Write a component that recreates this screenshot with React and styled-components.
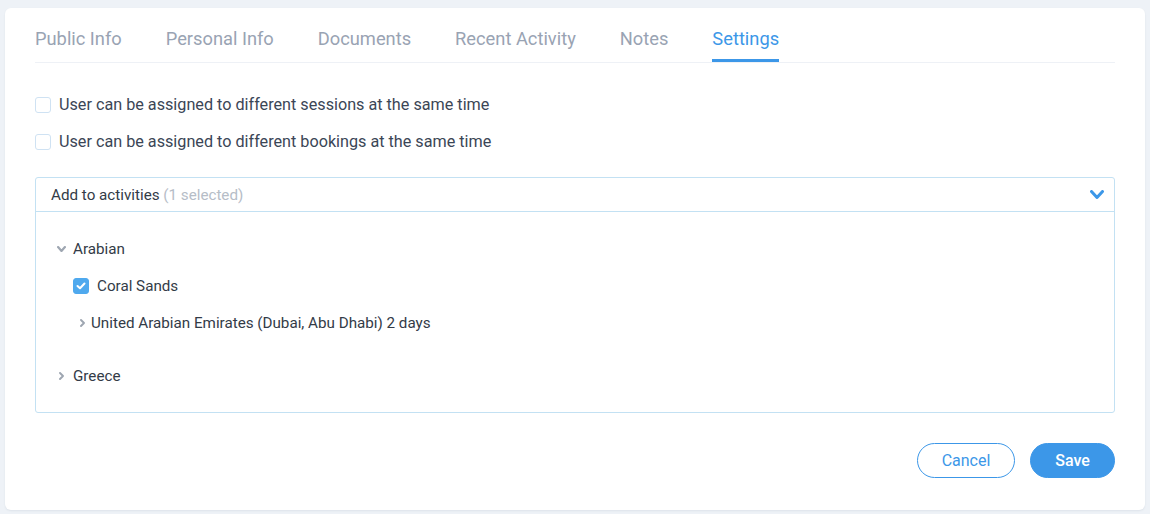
import React, { useState } from "react";
import styled, { createGlobalStyle } from "styled-components";

const GlobalStyle = createGlobalStyle`
  html, body { margin: 0; padding: 0; background: #eef2f7; }
  body { padding: 8px 5px 6px; font-family: Roboto, "Liberation Sans", Arial, sans-serif; }
  * { box-sizing: border-box; }
`;

const Card = styled.div`
  background: #fff;
  border-radius: 6px;
  box-shadow: 0 1px 2px rgba(40, 60, 90, 0.08);
  padding: 0 30px 32px;
`;

const TabList = styled.div`
  display: flex;
  gap: 44px;
  border-bottom: 1px solid #eef1f6;
`;

const Tab = styled.div`
  font-size: 18.3px;
  line-height: 22px;
  padding: 20px 0 9px;
  color: ${(p) => (p.$active ? "#3c97e8" : "#99a3b3")};
  border-bottom: 3px solid ${(p) => (p.$active ? "#3c97e8" : "transparent")};
  cursor: pointer;
`;

const Options = styled.div`
  display: flex;
  flex-direction: column;
  gap: 17px;
  margin-top: 32px;
`;

const CheckRow = styled.label`
  display: flex;
  align-items: center;
  gap: 8px;
  font-size: 16.2px;
  line-height: 20px;
  color: #3b4656;
`;

const Box = styled.span`
  width: 16px;
  height: 16px;
  border-radius: 3px;
  flex: none;
  display: inline-flex;
  align-items: center;
  justify-content: center;
  border: 1px solid ${(p) => (p.$checked ? "#4fa9ee" : "#cfe2f3")};
  background: ${(p) => (p.$checked ? "#4fa9ee" : "#fff")};
`;

const Dropdown = styled.div`
  margin-top: 25px;
  border: 1px solid #c3e1f3;
  border-radius: 3px;
`;

const DropHeader = styled.div`
  height: 34px;
  display: flex;
  align-items: center;
  justify-content: space-between;
  padding: 0 10px 0 15px;
  border-bottom: 1px solid #c3e1f3;
  font-size: 15.2px;
  color: #333b47;
`;

const Muted = styled.span`
  color: #b6bdc7;
`;

const TreeBody = styled.div`
  padding: 27px 20px 26px;
  display: flex;
  flex-direction: column;
`;

const TreeRow = styled.div`
  display: flex;
  align-items: center;
  height: 20px;
  font-size: 15.2px;
  color: #333b47;
  margin-top: ${(p) => p.$gap || 0}px;
  padding-left: ${(p) => p.$indent || 0}px;
  gap: ${(p) => p.$spacing || 8}px;
`;

const Caret = styled.span`
  width: ${(p) => p.$w || 10}px;
  display: inline-flex;
  justify-content: center;
  align-items: center;
  flex: none;
`;

const Actions = styled.div`
  display: flex;
  justify-content: flex-end;
  gap: 15px;
  margin-top: 30px;
`;

const Button = styled.button`
  height: 35px;
  border-radius: 18px;
  font-family: inherit;
  font-size: 16px;
  cursor: pointer;
  border: 1px solid #3c97e8;
  padding: 0;
  width: ${(p) => p.$w}px;
  color: ${(p) => (p.$primary ? "#fff" : "#3c97e8")};
  background: ${(p) => (p.$primary ? "#3c97e8" : "#fff")};
  font-weight: ${(p) => (p.$primary ? 500 : 400)};
`;

const Check = () => (
  <svg width="10" height="8" viewBox="0 0 10 8">
    <path d="M1.5 4 L4 6.3 L8.5 1.5" fill="none" stroke="#fff" strokeWidth="2" strokeLinecap="round" strokeLinejoin="round" />
  </svg>
);

const ChevDown = ({ color = "#9ea6b1", w = 9, h = 6, sw = 2.2 }) => (
  <svg width={w} height={h} viewBox={`0 0 ${w} ${h}`}>
    <path d={`M${sw / 2} ${sw / 2} L${w / 2} ${h - sw / 2} L${w - sw / 2} ${sw / 2}`} fill="none" stroke={color} strokeWidth={sw} strokeLinecap="round" strokeLinejoin="round" />
  </svg>
);

const ChevRight = () => (
  <svg width="5" height="8" viewBox="0 0 5 8">
    <path d="M1 1 L4 4 L1 7" fill="none" stroke="#9ea6b1" strokeWidth="1.9" strokeLinecap="round" strokeLinejoin="round" />
  </svg>
);

export default function App() {
  const tabs = ["Public Info", "Personal Info", "Documents", "Recent Activity", "Notes", "Settings"];
  const [active, setActive] = useState("Settings");
  return (
    <>
      <GlobalStyle />
      <Card>
        <TabList>
          {tabs.map((t) => (
            <Tab key={t} $active={t === active} onClick={() => setActive(t)}>
              {t}
            </Tab>
          ))}
        </TabList>
        <Options>
          <CheckRow>
            <Box />
            User can be assigned to different sessions at the same time
          </CheckRow>
          <CheckRow>
            <Box />
            User can be assigned to different bookings at the same time
          </CheckRow>
        </Options>
        <Dropdown>
          <DropHeader>
            <span>
              Add to activities <Muted>(1 selected)</Muted>
            </span>
            <ChevDown color="#3c97e8" w={14} h={9} sw={3} />
          </DropHeader>
          <TreeBody>
            <TreeRow $spacing={7}>
              <Caret $w={10}>
                <ChevDown />
              </Caret>
              Arabian
            </TreeRow>
            <TreeRow $gap={17} $indent={17} $spacing={8}>
              <Box $checked>
                <Check />
              </Box>
              Coral Sands
            </TreeRow>
            <TreeRow $gap={17} $indent={23} $spacing={6}>
              <Caret $w={6}>
                <ChevRight />
              </Caret>
              United Arabian Emirates (Dubai, Abu Dhabi) 2 days
            </TreeRow>
            <TreeRow $gap={33} $spacing={7}>
              <Caret $w={10}>
                <ChevRight />
              </Caret>
              Greece
            </TreeRow>
          </TreeBody>
        </Dropdown>
        <Actions>
          <Button $w={98}>Cancel</Button>
          <Button $w={85} $primary>
            Save
          </Button>
        </Actions>
      </Card>
    </>
  );
}
